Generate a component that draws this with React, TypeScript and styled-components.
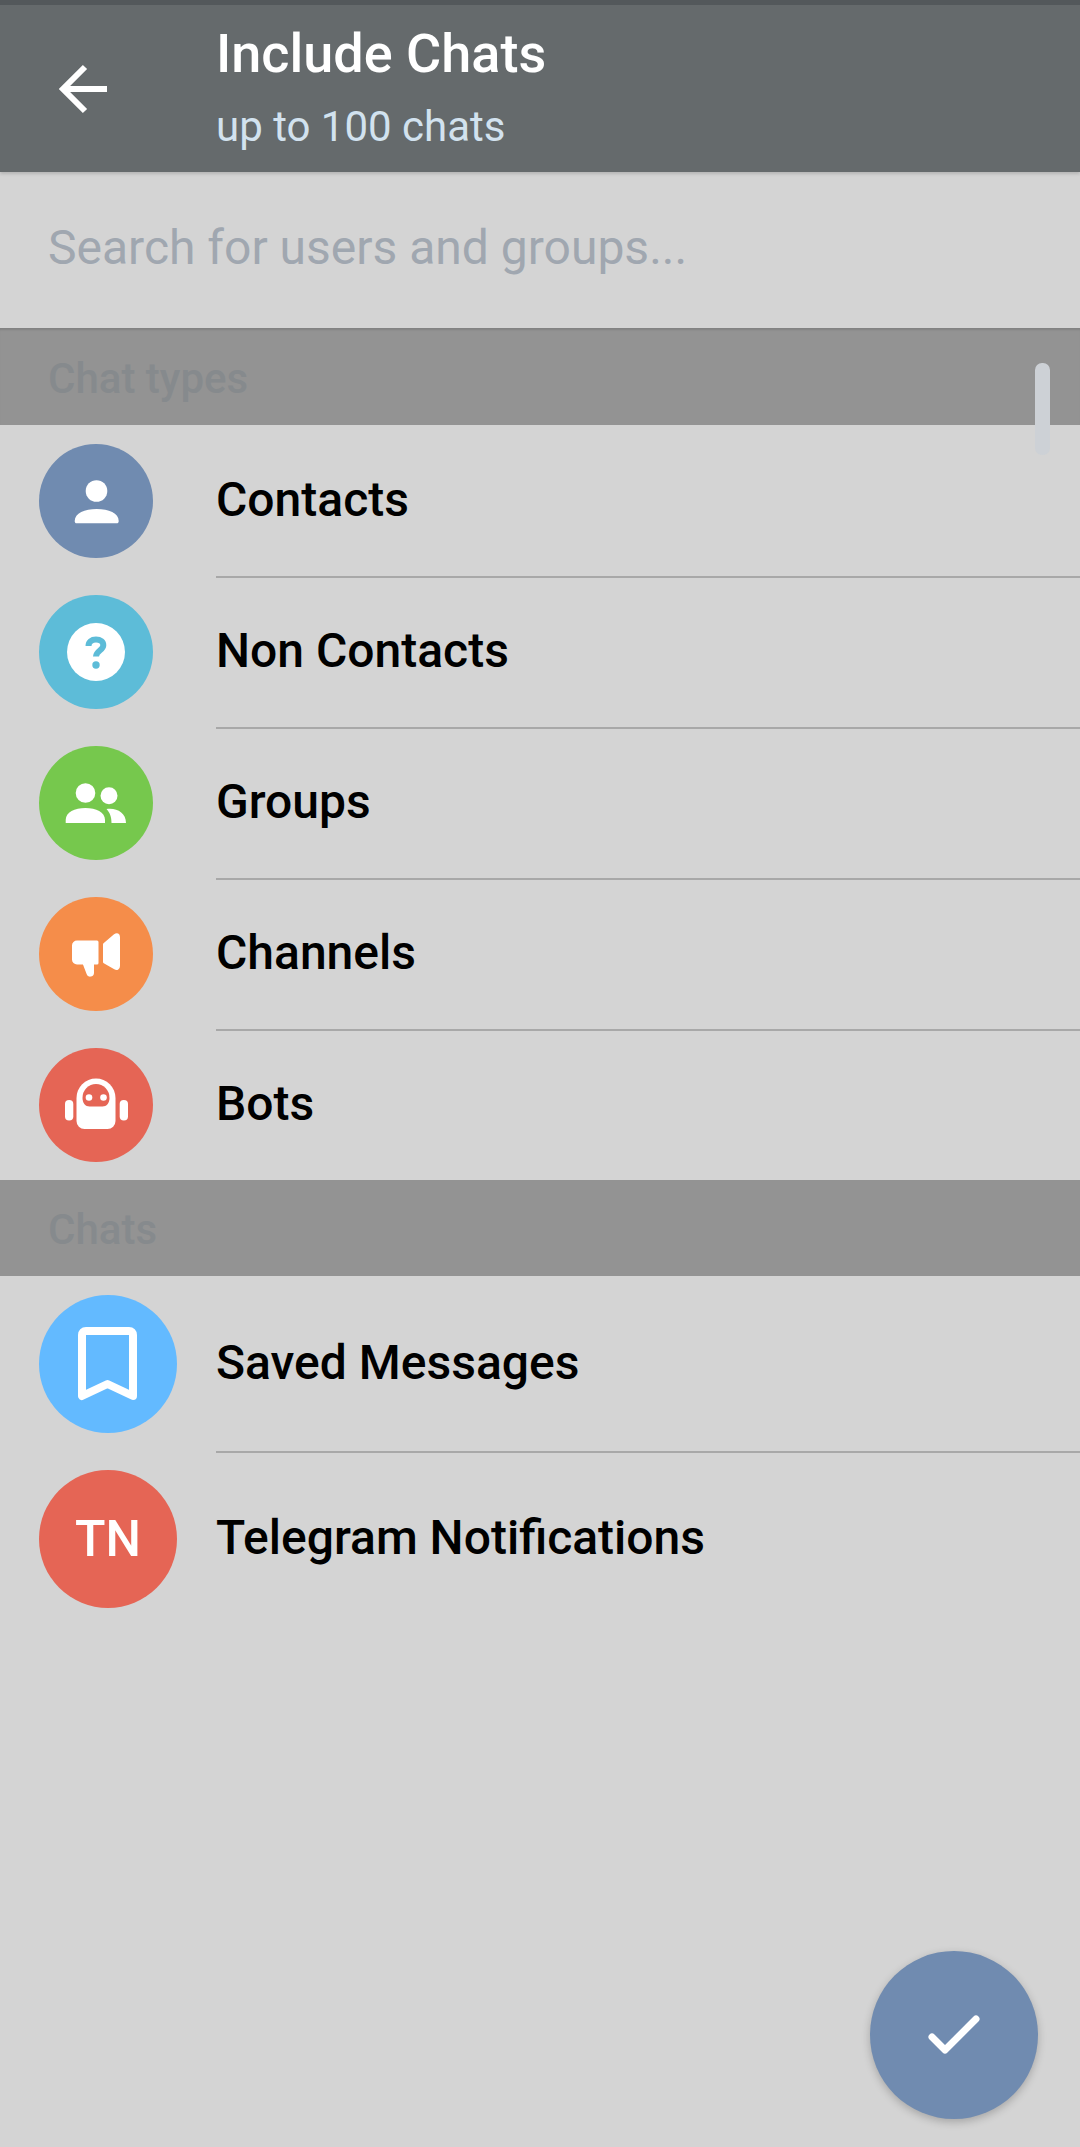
import React from "react";
import styled, { createGlobalStyle } from "styled-components";

const GlobalStyle = createGlobalStyle`
  html, body {
    margin: 0;
    padding: 0;
    background: #d4d4d4;
    font-family: Roboto, "Noto Sans", sans-serif;
  }
`;

const Page = styled.div`
  position: relative;
  width: 1080px;
  height: 2147px;
  overflow: hidden;
  background: #d4d4d4;
`;

const Header = styled.header`
  height: 172px;
  box-sizing: border-box;
  border-top: 5px solid #53585b;
  background: #656a6c;
  display: flex;
  align-items: center;
  box-shadow: 0 2px 3px rgba(0, 0, 0, 0.15);
`;

const BackButton = styled.div`
  width: 216px;
  flex: none;
  display: flex;
  padding-left: 58px;
  box-sizing: border-box;
`;

const Titles = styled.div`
  display: flex;
  flex-direction: column;
  margin-top: -2px;
`;

const Title = styled.div`
  font-size: 54px;
  font-weight: 500;
  line-height: 66px;
  color: #ffffff;
`;

const Subtitle = styled.div`
  font-size: 42px;
  line-height: 54px;
  margin-top: 13px;
  color: #d2e2ef;
`;

const SearchBar = styled.div`
  height: 156px;
  box-sizing: border-box;
  padding: 49px 0 0 48px;
  font-size: 48px;
  line-height: 54px;
  color: #a0a7b0;
`;

const SectionHeader = styled.div<{ $first?: boolean }>`
  height: ${({ $first }) => ($first ? 97 : 96)}px;
  box-sizing: border-box;
  padding: ${({ $first }) => ($first ? 29 : 28)}px 0 0 48px;
  background: #939393;
  box-shadow: ${({ $first }) => ($first ? "inset 0 3px 2px -1px rgba(0, 0, 0, 0.12)" : "none")};
  font-size: 42px;
  line-height: 44px;
  font-weight: 500;
  color: #868a8d;
`;

const RowWrap = styled.div`
  position: relative;
`;

const Row = styled.div<{ $tall?: boolean }>`
  height: ${({ $tall }) => ($tall ? 175 : 151)}px;
  box-sizing: border-box;
  display: flex;
  align-items: flex-start;
  padding: 19px 0 0 39px;
`;

const Avatar = styled.div<{ $color: string; $size: number }>`
  width: ${({ $size }) => $size}px;
  height: ${({ $size }) => $size}px;
  flex: none;
  border-radius: 50%;
  background: ${({ $color }) => $color};
  display: flex;
  align-items: center;
  justify-content: center;
  color: #ffffff;
  font-size: 50px;
  font-weight: 500;
`;

const RowBody = styled.div<{ $last?: boolean; $tall?: boolean }>`
  position: absolute;
  left: 216px;
  right: 0;
  height: ${({ $tall }) => ($tall ? 177 : 153)}px;
  top: 0;
  box-sizing: border-box;
  border-bottom: ${({ $last }) => ($last ? "none" : "2px solid #a8a8a8")};
  font-size: 48px;
  font-weight: 500;
  color: #000000;
  padding-top: ${({ $tall }) => ($tall ? 60 : 48)}px;
  line-height: 54px;
`;

const ScrollThumb = styled.div`
  position: absolute;
  left: 1035px;
  top: 363px;
  width: 15px;
  height: 92px;
  border-radius: 7px;
  background: #cdd1d6;
`;

const Fab = styled.div`
  position: absolute;
  left: 870px;
  top: 1951px;
  width: 168px;
  height: 168px;
  border-radius: 50%;
  background: #708bb0;
  display: flex;
  align-items: center;
  justify-content: center;
  box-shadow: 0 3px 8px rgba(0, 0, 0, 0.22);
`;

const UserIcon = () => (
  <svg width="114" height="114" viewBox="0 0 114 114" fill="#fff">
    <circle cx="57.500" cy="47" r="10.800" />
    <path d="M35.700 77c0-8 10-12 22-12s22 4 22 12c0 1.500-.7 2.300-2 2.300h-40c-1.300 0-2-.8-2-2.300z" />
  </svg>
);

const QuestionIcon = () => (
  <svg width="114" height="114" viewBox="0 0 114 114">
    <circle cx="57" cy="57" r="29" fill="#fff" />
    <path d="M49.500 51c0-4 3-6.500 7.500-6.500s7.300 2.500 7.300 5.800c0 5-7.300 5.500-7.300 11.200" fill="none" stroke="#5dbcd8" strokeWidth="6" />
    <circle cx="57" cy="70" r="3.700" fill="#5dbcd8" />
  </svg>
);

const GroupIcon = () => (
  <svg width="114" height="114" viewBox="0 0 114 114" fill="#fff">
    <circle cx="46.500" cy="47" r="9.800" />
    <circle cx="70" cy="49.700" r="8.500" />
    <path d="M26.700 77v-3c0-8 9-12 19.700-12S66 66 66 74v3z" />
    <path d="M67.500 63c10-1.500 19.500 3.500 19.500 14H72.500c0-6-1.500-10-5-14z" />
  </svg>
);

const ChannelIcon = () => (
  <svg width="114" height="114" viewBox="0 0 114 114" fill="#fff" stroke="#fff" strokeWidth="3" strokeLinejoin="round">
    <path d="M38 45H58V66H53.500V76a2.300 2.300 0 0 1-4.500.5L45 66H38a3.500 3.500 0 0 1-3.500-3.500V48.500A3.500 3.500 0 0 1 38 45z" />
    <path d="M65.500 47.500L76 38.500c2-1.500 3.500-.5 3.500 1.500V69c0 2-1.500 3-3.500 2L65.500 65z" />
  </svg>
);

const BotIcon = () => (
  <svg width="114" height="114" viewBox="0 0 114 114" fill="#fff">
    <rect x="26" y="52" width="8.300" height="20.500" rx="4.100" />
    <rect x="80.700" y="52" width="8.300" height="20.500" rx="4.100" />
    <path d="M37.500 50a19.500 19.500 0 0 1 39 0V73a8 8 0 0 1-8 8H45.500a8 8 0 0 1-8-8z" />
    <path d="M43.500 50a13.500 14 0 0 1 27 0c0 5-3 8.500-7 8.500H50.500c-4 0-7-3.500-7-8.500z" fill="#e56555" />
    <circle cx="50" cy="49.500" r="3.300" />
    <circle cx="64.500" cy="49.500" r="3.300" />
  </svg>
);

const BookmarkIcon = () => (
  <svg width="138" height="138" viewBox="0 0 138 138" fill="none" stroke="#fff" strokeWidth="8" strokeLinejoin="round" strokeLinecap="round">
    <path d="M43 40c0-2.500 1.500-4 4-4h43c2.500 0 4 1.500 4 4v61L68.500 89 43 101z" />
  </svg>
);

const rowsTypes = [
  { name: "Contacts", color: "#708bb0", icon: <UserIcon /> },
  { name: "Non Contacts", color: "#5dbcd8", icon: <QuestionIcon /> },
  { name: "Groups", color: "#76c84d", icon: <GroupIcon /> },
  { name: "Channels", color: "#f58d4a", icon: <ChannelIcon /> },
  { name: "Bots", color: "#e56555", icon: <BotIcon />, last: true },
];

export default function App() {
  return (
    <Page>
      <GlobalStyle />
      <Header>
        <BackButton>
          <svg width="50" height="50" viewBox="0 0 50 50" fill="none" stroke="#fff" strokeWidth="6">
            <path d="M49 25H6M27 3L5 25l22 22" />
          </svg>
        </BackButton>
        <Titles>
          <Title>Include Chats</Title>
          <Subtitle>up to 100 chats</Subtitle>
        </Titles>
      </Header>
      <SearchBar>Search for users and groups...</SearchBar>
      <SectionHeader $first>Chat types</SectionHeader>
      {rowsTypes.map((r) => (
        <RowWrap key={r.name}>
          <Row>
            <Avatar $color={r.color} $size={114}>{r.icon}</Avatar>
          </Row>
          <RowBody $last={r.last}>{r.name}</RowBody>
        </RowWrap>
      ))}
      <SectionHeader>Chats</SectionHeader>
      <RowWrap>
        <Row $tall>
          <Avatar $color="#63baff" $size={138}><BookmarkIcon /></Avatar>
        </Row>
        <RowBody $tall>Saved Messages</RowBody>
      </RowWrap>
      <RowWrap>
        <Row $tall>
          <Avatar $color="#e56555" $size={138}>TN</Avatar>
        </Row>
        <RowBody $tall $last>Telegram Notifications</RowBody>
      </RowWrap>
      <ScrollThumb />
      <Fab>
        <svg width="60" height="46" viewBox="0 0 60 46" fill="none" stroke="#fff" strokeWidth="7" strokeLinecap="round" strokeLinejoin="round">
          <path d="M8 25l13 13L52 7" />
        </svg>
      </Fab>
    </Page>
  );
}
